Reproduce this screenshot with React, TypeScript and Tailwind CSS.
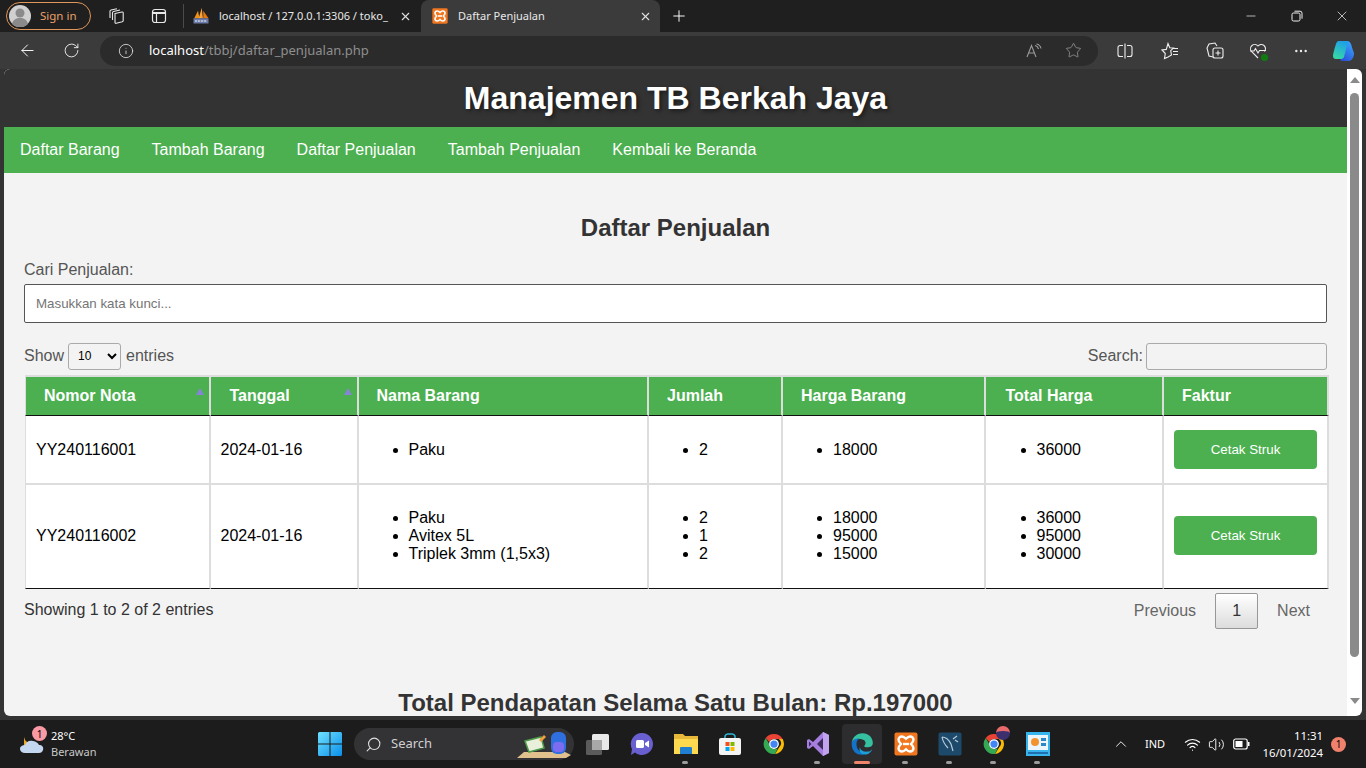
import React from "react";
import { ArrowLeft, RotateCw, Info, Star, X, Plus, Minus, ChevronUp, Search, Wifi, Volume2, MoreHorizontal } from "lucide-react";

const Xampp = ({ s = 16 }: { s?: number }) => (
  <svg width={s} height={s} viewBox="0 0 24 24">
    <rect x="0.5" y="0.5" width="23" height="23" rx="2" fill="#f0761f" />
    <path d="M8 4.5c-2 0-3.5 1.5-3.5 3.3 0 1.6 1 2.7 2.5 4.2-1.5 1.5-2.5 2.6-2.5 4.2 0 1.8 1.5 3.3 3.5 3.3 1.6 0 2.8-1 4-2.3 1.2 1.3 2.4 2.3 4 2.3 2 0 3.5-1.5 3.5-3.3 0-1.6-1-2.7-2.5-4.2 1.5-1.5 2.5-2.6 2.5-4.2 0-1.8-1.5-3.3-3.5-3.3-1.6 0-2.8 1-4 2.3-1.2-1.3-2.4-2.3-4-2.3z" fill="none" stroke="#fff" strokeWidth="2.4" />
    <path d="M9 12h6" stroke="#fff" strokeWidth="2.4" />
  </svg>
);

const PhpMyAdmin = () => (
  <svg width="18" height="18" viewBox="0 0 24 24">
    <path d="M3 15 L8 5 L10 15z" fill="#f29111" />
    <path d="M9 15 L13 1 L14.500 15z" fill="#f4a63c" />
    <path d="M15 15 L15 5 L22 15z" fill="#e4780f" />
    <rect x="2" y="15" width="20" height="7" fill="#6c7aa8" />
    <path d="M4 18.500h16" stroke="#c4cbe0" strokeWidth="2" strokeDasharray="3 1" />
  </svg>
);

const Chrome = ({ s = 24 }: { s?: number }) => (
  <svg width={s} height={s} viewBox="0 0 48 48">
    <path d="M24 4a20 20 0 0 1 17.3 10H24a10 10 0 0 0-9.3 6.3L7.5 12A20 20 0 0 1 24 4z" fill="#ea4335" />
    <path d="M41.3 14A20 20 0 0 1 26 43.9L34.7 30a10 10 0 0 0-1-16z" fill="#fbbc05" />
    <path d="M26 43.9A20 20 0 0 1 7.5 12l8.7 15a10 10 0 0 0 10 6.9l5.2-.7z" fill="#34a853" />
    <circle cx="24" cy="24" r="8.5" fill="#4285f4" stroke="#fff" strokeWidth="2.5" />
  </svg>
);

const Edge = () => (
  <svg width="26" height="26" viewBox="0 0 48 48">
    <path d="M5 24C5 12 14 4 25 4c11 0 19 8 19 18 0 6-5 8-10 8-4 0-6-1-6-3 4-2 4-11-5-12C13 14 5 18 5 24z" fill="#35c1a0" />
    <path d="M5 24c0-7 7-11 15-10-5 2-7 7-6 13 1 8 8 14 17 15-3 1-5 2-8 2C12 44 5 35 5 24z" fill="#1273c8" />
    <path d="M20 30c1 6 8 9 14 8 4 0 7-2 9-5-3 9-11 11-16 10-6-1-9-6-7-13z" fill="#1c9fd8" />
  </svg>
);

const VS = () => (
  <svg width="24" height="26" viewBox="0 0 24 26">
    <path d="M17 1 L23 4 V22 L17 25 L7 15 L3 18 L1 17 V9 L3 8 L7 11z" fill="#a67ee0" />
    <path d="M17 7 L11 13 L17 19z" fill="#3a2a5a" />
    <path d="M3 10.5 L5.5 13 L3 15.5z" fill="#3a2a5a" />
    <path d="M17 1 L23 4 V22 L17 25z" fill="#c0a2ee" />
  </svg>
);

const TaskItem = ({ children, dot, active }: { children: React.ReactNode; dot?: boolean; active?: boolean }) => (
  <div className={`relative flex h-[40px] w-[40px] mx-[2px] items-center justify-center rounded ${active ? "bg-[#2d2d30]" : ""}`}>
    {children}
    {dot && <span className="absolute bottom-0 left-[16px] h-[3px] w-[6px] rounded-full bg-[#9b9b9b]" />}
    {active && <span className="absolute bottom-0 left-[12px] h-[3px] w-[16px] rounded-full bg-[#f0836b]" />}
  </div>
);

const thBase = "relative h-[41px] border-t-2 border-r-2 border-b border-t-[#ddd] border-r-[#ddd] border-b-[#111] bg-[#4caf50] p-0 text-left text-[16px] font-bold text-white";
const tdBase = "border-r-2 border-r-[#ddd] bg-white text-[16px] leading-[18px] text-black align-middle";

const Sort = () => <span className="absolute right-[5px] top-[11px] h-0 w-0 border-x-[4px] border-b-[7px] border-x-transparent border-b-[#8585d8]" />;

const List = ({ items }: { items: string[] }) => (
  <ul className="my-4 list-disc pl-10">
    {items.map((t) => (
      <li key={t}>{t}</li>
    ))}
  </ul>
);

const rows = [
  { no: "YY240116001", a: ["Paku"], b: ["2"], c: ["18000"], d: ["36000"], h: "border-b-2 border-b-[#ddd] pt-[9px] pb-2" },
  { no: "YY240116002", a: ["Paku", "Avitex 5L", "Triplek 3mm (1,5x3)"], b: ["2 ", "1", "2"], c: ["18000", "95000", "15000"], d: ["36000", "95000", "30000"], h: "border-b border-b-[#111] pt-2 pb-[9px]" },
];

export default function App() {
  return (
    <div className="flex h-[768px] w-[1366px] flex-col overflow-hidden bg-[#333] font-['Liberation_Sans',Arial,sans-serif]">
      {/* Tab strip */}
      <div className="flex h-[32px] shrink-0 items-end bg-[#1f1f1f] font-['Noto_Sans',sans-serif] text-[11px] text-white">
        <div className="ml-[6px] flex h-[28px] w-[85px] items-center self-center rounded-full border border-[#e0975a] pl-[2px]">
          <svg width="22" height="22" viewBox="0 0 22 22">
            <circle cx="11" cy="11" r="11" fill="#d0d0d0" />
            <circle cx="11" cy="8" r="4.5" fill="#8a8a8a" />
            <path d="M3 19c1-5 5-6 8-6s7 1 8 6a11 11 0 0 1-16 0z" fill="#8a8a8a" />
          </svg>
          <span className="ml-[9px] text-[11.5px] text-[#e8a06a]">Sign in</span>
        </div>
        <div className="ml-[10px] flex h-[32px] w-[32px] items-center justify-center">
          <svg width="18" height="18" viewBox="0 0 18 18" fill="none" stroke="#e8e8e8" strokeWidth="1.1">
            <path d="M7 6.500l7-1.500q1.200-.2 1.200 1v7.500q0 1-1 1.300l-6 1.500q-1.200.2-1.200-1z" />
            <path d="M4.500 13V5.800q0-1 1-1.300l6.500-1.500" />
            <path d="M2 11V4.300q0-1 1-1.300l6-1.300" />
          </svg>
        </div>
        <div className="ml-[10px] flex h-[32px] w-[32px] items-center justify-center">
          <svg width="16" height="16" viewBox="0 0 16 16" fill="none" stroke="#e8e8e8" strokeWidth="1.2">
            <rect x="1.5" y="1.5" width="13" height="13" rx="2.5" />
            <path d="M1.5 5h13" strokeWidth="2" />
            <path d="M5.5 5v9" />
          </svg>
        </div>
        <div className="ml-[8px] mb-[4px] h-[24px] w-px bg-[#4a4a4a]" />
        <div className="flex h-[32px] w-[237px] items-center pl-[8px]">
          <PhpMyAdmin />
          <span className="ml-[9px] w-[174px] overflow-hidden whitespace-nowrap text-[11px] text-[#e8e8e8]">localhost / 127.0.0.1:3306 / toko_</span>
          <X size={13} className="ml-[6px] text-[#e0e0e0]" />
        </div>
        <div className="flex h-[32px] w-[239px] items-center rounded-t-lg bg-[#3b3b3b] pl-[11px]">
          <Xampp s={16} />
          <span className="ml-[10px] w-[181px] text-[#e8e8e8]">Daftar Penjualan</span>
          <X size={13} className="text-[#e0e0e0]" />
        </div>
        <Plus size={18} strokeWidth={1.3} className="mb-[7px] ml-[10px] text-white" />
        <div className="ml-auto flex h-[32px] items-center text-[#f0f0f0]">
          <Minus size={14} strokeWidth={1.2} className="mr-[33px]" />
          <svg width="12" height="12" viewBox="0 0 12 12" fill="none" stroke="currentColor" className="mr-[31px]">
            <rect x="1" y="3" width="8" height="8" rx="1.5" />
            <path d="M3.5 1.2h5.5a2 2 0 0 1 2 2v5.5" />
          </svg>
          <X size={16} strokeWidth={1.1} className="mr-[16px]" />
        </div>
      </div>

      {/* Address bar */}
      <div className="flex h-[37px] shrink-0 items-center bg-[#3b3b3b] font-['Noto_Sans',sans-serif] text-white">
        <ArrowLeft size={19} strokeWidth={1.2} className="ml-[18px]" />
        <RotateCw size={17} strokeWidth={1.2} className="ml-[26px]" />
        <div className="ml-[20px] flex h-[30px] w-[998px] items-center rounded-full bg-[#2b2b2b] pl-[18px]">
          <Info size={16} strokeWidth={1.2} className="text-[#e8e8e8]" />
          <span className="ml-[15px] text-[13px]">
            <span className="text-white">localhost</span>
            <span className="text-[#8f8f8f]">/tbbj/daftar_penjualan.php</span>
          </span>
          <svg width="16" height="16" viewBox="0 0 16 16" fill="none" stroke="#9a9a9a" strokeWidth="1.1" className="ml-auto">
            <path d="M1 14L5.5 2.5 10 14M2.8 10h5.4" />
            <path d="M9 2.5c2 .5 3 1.500 3.500 3.500M10.500 1c2.500.5 4 2 4.500 4.500" />
          </svg>
          <Star size={17} strokeWidth={1.1} className="ml-[23px] mr-[16px] text-[#9a9a9a]" />
        </div>
        <svg width="16" height="16" viewBox="0 0 16 16" fill="none" stroke="#eee" strokeWidth="1.1" className="ml-[19px]">
          <path d="M6 2.500H3a2 2 0 0 0-2 2v7a2 2 0 0 0 2 2h3M10 2.500h3a2 2 0 0 1 2 2v7a2 2 0 0 1-2 2h-3M8 .5v15" />
        </svg>
        <svg width="18" height="18" viewBox="0 0 18 18" fill="none" stroke="#eee" strokeWidth="1.1" className="ml-[28px]">
          <path d="M7 1.500l1.800 4.200 3.700.3-2.800 2.700.8 4.300L7 15l-3.500 1.500.8-5L1 8l4.300-.6z" />
          <path d="M12 6.500h5M12 9.500h5M12 12.500h5" />
        </svg>
        <svg width="18" height="18" viewBox="0 0 18 18" fill="none" stroke="#eee" strokeWidth="1.1" className="ml-[27px]">
          <path d="M7 15l-4-1-2-8 2-4 6-1 2 3" />
          <rect x="7" y="6" width="10" height="10" rx="2" />
          <path d="M12 8.500v5M9.500 11h5" />
        </svg>
        <div className="relative ml-[25px] h-[18px] w-[18px]">
          <svg width="18" height="18" viewBox="0 0 18 18" fill="none" stroke="#eee" strokeWidth="1.1">
            <path d="M9 16L2.500 9.500A4 4 0 0 1 9 4a4 4 0 0 1 6.500 5.500" />
            <path d="M1 9h4l1.500-2.500L9 11l1.500-2.500H17" />
          </svg>
          <span className="absolute bottom-[-1px] right-[-1px] h-[7px] w-[7px] rounded-full bg-[#107c10]" />
        </div>
        <MoreHorizontal size={16} strokeWidth={1.6} className="ml-[26px] text-[#eee]" />
        <svg width="24" height="24" viewBox="0 0 24 24" className="ml-[23px]">
          <defs>
            <linearGradient id="cp1" x1="0.6" y1="0" x2="0.2" y2="1">
              <stop offset="0" stopColor="#1f9fe8" />
              <stop offset="1" stopColor="#36dca0" />
            </linearGradient>
            <linearGradient id="cp2" x1="0.8" y1="0" x2="0.2" y2="1">
              <stop offset="0" stopColor="#3aa8ff" />
              <stop offset="1" stopColor="#2a4fd8" />
            </linearGradient>
          </defs>
          <path d="M15 2c2 0 3 1 4 3 1 3 2 7 3 9 0 4-2 8-5 8h-7c-2 0-2-1-1-2l3-3z" fill="url(#cp2)" />
          <path d="M7 2h8c2 0 1 2 .5 3L12 18c-.5 1-1.500 2-3 2H4c-2 0-3-1-3-3 0-2 2-9 3-12 .5-2 1.500-3 3-3z" fill="url(#cp1)" />
        </svg>
      </div>

      {/* Viewport */}
      <div className="flex h-[651px] shrink-0 bg-[#333] pl-[4px] pr-[4px] pb-[4px]">
        <div className="flex h-full w-[1343px] flex-col overflow-hidden rounded-l-[6px] bg-[#f3f3f3]">
          <div className="flex h-[58px] shrink-0 items-center justify-center bg-[#333] pb-[1px] text-[32px] font-bold text-white [text-shadow:2px_2px_4px_rgba(0,0,0,0.5)]">
            Manajemen TB Berkah Jaya
          </div>
          <nav className="flex h-[46px] shrink-0 items-center gap-[32px] bg-[#4caf50] pl-[16px] text-[16px] text-white">
            <span>Daftar Barang</span>
            <span>Tambah Barang</span>
            <span>Daftar Penjualan</span>
            <span>Tambah Penjualan</span>
            <span>Kembali ke Beranda</span>
          </nav>
          <div className="flex flex-col px-[20px] pt-[41px]">
            <h2 className="text-center text-[24px] font-bold leading-[27px] text-[#333]">Daftar Penjualan</h2>
            <label className="mt-[20px] text-[16px] leading-[18px] text-[#555]">Cari Penjualan:</label>
            <div className="mt-[5px] flex h-[39px] w-[1303px] items-center rounded-[2px] border border-[#555] bg-white pl-[11px] text-[13.33px] text-[#757575]">
              Masukkan kata kunci...
            </div>
            <div className="mt-[19px] flex h-[28px] w-[1303px] items-center text-[16px] text-[#555]">
              <span>Show</span>
              <select defaultValue="10" className="ml-[4px] h-[27px] w-[53px] appearance-auto rounded-[3px] border border-[#aaa] bg-[#f3f3f3] pl-[5px] text-[12px] text-black">
                <option>10</option>
              </select>
              <span className="ml-[5px]">entries</span>
              <span className="ml-auto mr-[3px]">Search:</span>
              <div className="h-[27px] w-[181px] rounded-[3px] border border-[#aaa] bg-[#f3f3f3]" />
            </div>
            <table className="ml-px mt-[5px] w-[1304px] table-fixed border-separate border-spacing-0">
              <colgroup>
                <col className="w-[186px]" />
                <col className="w-[148px]" />
                <col className="w-[290px]" />
                <col className="w-[134px]" />
                <col className="w-[203px]" />
                <col className="w-[178px]" />
                <col className="w-[165px]" />
              </colgroup>
              <thead>
                <tr>
                  <th className={`${thBase} border-l border-l-[#ddd] pl-[18px]`}>Nomor Nota<Sort /></th>
                  <th className={`${thBase} pl-[18.5px]`}>Tanggal<Sort /></th>
                  <th className={`${thBase} pl-[17.5px]`}>Nama Barang</th>
                  <th className={`${thBase} pl-[18px]`}>Jumlah</th>
                  <th className={`${thBase} pl-[18px]`}>Harga Barang</th>
                  <th className={`${thBase} pl-[19.5px]`}>Total Harga</th>
                  <th className={`${thBase} pl-[18px]`}>Faktur</th>
                </tr>
              </thead>
              <tbody>
                {rows.map((r) => (
                  <tr key={r.no}>
                    <td className={`${tdBase} ${r.h} border-l border-l-[#ddd] pl-[10px]`}>{r.no}</td>
                    <td className={`${tdBase} ${r.h} pl-[9.5px]`}>2024-01-16</td>
                    <td className={`${tdBase} ${r.h} pl-[9.5px]`}><List items={r.a} /></td>
                    <td className={`${tdBase} ${r.h} pl-[10px]`}><List items={r.b} /></td>
                    <td className={`${tdBase} ${r.h} pl-[10px]`}><List items={r.c} /></td>
                    <td className={`${tdBase} ${r.h} pl-[10.5px]`}><List items={r.d} /></td>
                    <td className={`${tdBase} ${r.h} pl-[10px]`}>
                      <div className="-mt-px flex h-[39px] w-[143px] items-center justify-center rounded-[4px] bg-[#4caf50] text-[13.33px] text-white">Cetak Struk</div>
                    </td>
                  </tr>
                ))}
              </tbody>
            </table>
            <div className="mt-[4px] flex h-[36px] w-[1303px] items-start text-[16px]">
              <span className="mt-[8px] leading-[18px] text-[#333]">Showing 1 to 2 of 2 entries</span>
              <div className="ml-auto flex items-center text-[#666]">
                <span>Previous</span>
                <span className="mx-[19px] flex h-[36px] w-[43px] items-center justify-center rounded-[2px] border border-[#979797] bg-gradient-to-b from-white to-[#dcdcdc] text-[#333]">1</span>
                <span className="mr-[17px]">Next</span>
              </div>
            </div>
            <div className="mt-[60px] text-center text-[24px] font-bold leading-[28px] text-[#333]">Total Pendapatan Selama Satu Bulan: Rp.197000</div>
          </div>
        </div>
        {/* Scrollbar */}
        <div className="flex h-full w-[15px] shrink-0 flex-col items-center rounded-r-[6px] bg-white">
          <span className="mt-[8px] h-0 w-0 border-x-[5px] border-b-[6px] border-x-transparent border-b-[#8a8a8a]" />
          <div className="mt-[10px] h-[564px] w-[9px] rounded-full bg-[#8a8a8a]" />
          <span className="mt-[41px] h-0 w-0 border-x-[5px] border-t-[6px] border-x-transparent border-t-[#8a8a8a]" />
        </div>
      </div>

      {/* Taskbar */}
      <div className="flex h-[48px] shrink-0 items-center bg-[#1c1c1c] font-['Noto_Sans',sans-serif] text-white">
        <div className="relative ml-[19px] h-[30px] w-[28px]">
          <svg width="28" height="28" viewBox="0 0 28 28">
            <path d="M5 8a7 7 0 0 0 8 6l-8 3z" fill="#f2a81d" />
            <path d="M6 24c-3 0-5-2-5-4 0-3 3-4 5-4 1-3 4-5 8-4 3 .5 5 2 6 4 3 0 5 2 4 5-.5 2-2 3-4 3z" fill="#c4d7f0" />
          </svg>
          <span className="absolute left-[13px] top-[-3px] flex h-[15px] w-[15px] items-center justify-center rounded-full bg-[#f99aa4] text-[10px] leading-none text-black">1</span>
        </div>
        <div className="ml-[4px] flex w-[267px] flex-col text-[11px] leading-[16px]">
          <span>28°C</span>
          <span className="text-[#c8c8c8]">Berawan</span>
        </div>
        <svg width="24" height="24" viewBox="0 0 24 24">
          <defs>
            <linearGradient id="win" x1="0" y1="0" x2="1" y2="1">
              <stop offset="0" stopColor="#6fe1ff" />
              <stop offset="1" stopColor="#0a8fea" />
            </linearGradient>
          </defs>
          <path d="M0 1.500A1.500 1.500 0 0 1 1.500 0h10v11.500H0zM12.500 0h10A1.500 1.500 0 0 1 24 1.500v10H12.500zM0 12.500h11.500V24h-10A1.500 1.500 0 0 1 0 22.500zM12.500 12.500H24v10a1.500 1.500 0 0 1-1.500 1.500h-10z" fill="url(#win)" />
        </svg>
        <div className="relative ml-[12px] flex h-[32px] w-[220px] items-center rounded-full bg-[#333336] pl-[11px]">
          <Search size={17} strokeWidth={1.5} className="scale-x-[-1] text-[#e0e0e0]" />
          <span className="ml-[9px] text-[13px] text-[#d0d0d0]">Search</span>
          <svg width="58" height="32" viewBox="0 0 58 32" className="absolute bottom-[-1px] right-[3px]">
            <path d="M4 29L11 23H52L58 26 53 29z" fill="#e0c08c" />
            <path d="M12 12l16-4 3 11-15 4z" fill="#e8f0dc" stroke="#4d9a4a" strokeWidth="1.5" />
            <path d="M26 11l5-5 2 2-5 5z" fill="#f2a03d" />
            <rect x="38" y="3" width="15" height="22" rx="6" fill="#2f6fe0" />
            <rect x="40" y="13" width="11" height="10" rx="4" fill="#7c6cf0" />
          </svg>
        </div>
        <div className="ml-[2px] flex items-center">
          <TaskItem>
            <svg width="26" height="24" viewBox="0 0 26 24" className="-ml-[3px]">
              <rect x="2" y="8" width="16" height="15" rx="1.500" fill="#5b5b5b" />
              <rect x="8" y="2" width="17" height="16" rx="1.500" fill="#e8e8e8" />
              <rect x="8" y="8" width="10" height="10" fill="#a8a8a8" />
            </svg>
          </TaskItem>
          <TaskItem>
            <svg width="24" height="24" viewBox="0 0 24 24">
              <path d="M12 1a11 11 0 1 1-7 19.500L1 23l1-6A11 11 0 0 1 12 1z" fill="#6a5fd0" />
              <rect x="6" y="8" width="8" height="8" rx="1.500" fill="#fff" />
              <path d="M15 11l4-2.500v7L15 13z" fill="#fff" />
            </svg>
          </TaskItem>
          <TaskItem dot>
            <svg width="26" height="24" viewBox="0 0 26 24">
              <path d="M1 2h9l2 2h13v18H1z" fill="#e8b83a" />
              <path d="M1 7h24v15H1z" fill="#fcd94f" />
              <path d="M8 15h10a1 1 0 0 1 1 1v6H7v-6a1 1 0 0 1 1-1z" fill="#1f7fd0" />
            </svg>
          </TaskItem>
          <TaskItem>
            <svg width="24" height="24" viewBox="0 0 24 24">
              <path d="M7 7V4a3 3 0 0 1 3-2h4a3 3 0 0 1 3 2v3" fill="none" stroke="#2fb6d8" strokeWidth="1.500" />
              <rect x="1" y="6" width="22" height="17" rx="2" fill="#f4f4f4" />
              <rect x="7.500" y="10" width="4" height="4" fill="#f25022" />
              <rect x="12.500" y="10" width="4" height="4" fill="#7fba00" />
              <rect x="7.500" y="15" width="4" height="4" fill="#00a4ef" />
              <rect x="12.500" y="15" width="4" height="4" fill="#ffb900" />
            </svg>
          </TaskItem>
          <TaskItem><Chrome /></TaskItem>
          <TaskItem dot><VS /></TaskItem>
          <TaskItem active><Edge /></TaskItem>
          <TaskItem dot><Xampp s={24} /></TaskItem>
          <TaskItem dot>
            <svg width="24" height="24" viewBox="0 0 24 24">
              <rect x="0.500" y="0.500" width="23" height="23" rx="2" fill="#1d4a6b" />
              <path d="M4 5c4 0 7 3 9 7l2 7M4 5c1 5 3 8 6 11M15 7l4-3M17 8l3 2" fill="none" stroke="#b9cbd8" strokeWidth="1.200" />
            </svg>
          </TaskItem>
          <TaskItem dot>
            <div className="relative">
              <Chrome />
              <span className="absolute right-[-4px] top-[-6px] h-[14px] w-[14px] rounded-full border-t-[5px] border-t-[#e86a6a] bg-[#3c2f6e]" />
            </div>
          </TaskItem>
          <TaskItem dot>
            <svg width="24" height="24" viewBox="0 0 24 24">
              <rect width="24" height="24" fill="#37b4ee" />
              <rect x="2" y="3" width="20" height="15" fill="#eaf6fc" />
              <circle cx="9" cy="10" r="4" fill="#f29330" />
              <rect x="15" y="6" width="5" height="3" fill="#2d86c8" />
              <rect x="15" y="11" width="5" height="3" fill="#2d86c8" />
              <rect x="2" y="20" width="20" height="2" fill="#1f6fae" />
            </svg>
          </TaskItem>
        </div>
        <ChevronUp size={18} strokeWidth={1.3} className="ml-[52px] text-[#eee]" />
        <span className="ml-[15px] text-[11px]">IND</span>
        <Wifi size={17} strokeWidth={1.6} className="ml-[19px]" />
        <Volume2 size={17} strokeWidth={1.3} className="ml-[7px]" />
        <svg width="17" height="12" viewBox="0 0 17 12" fill="none" className="ml-[8px]">
          <rect x="0.700" y="1" width="13.500" height="10" rx="2" stroke="#fff" strokeWidth="1.200" />
          <rect x="2.500" y="3" width="7" height="6" fill="#fff" />
          <rect x="15" y="4" width="1.500" height="4" fill="#fff" />
        </svg>
        <div className="ml-[13px] flex w-[60px] flex-col items-end text-[11.4px] leading-[17px]">
          <span>11:31</span>
          <span>16/01/2024</span>
        </div>
        <span className="ml-[8px] flex h-[15px] w-[15px] items-center justify-center rounded-full bg-[#f0816c] text-[10px] leading-none text-black">1</span>
      </div>
    </div>
  );
}
